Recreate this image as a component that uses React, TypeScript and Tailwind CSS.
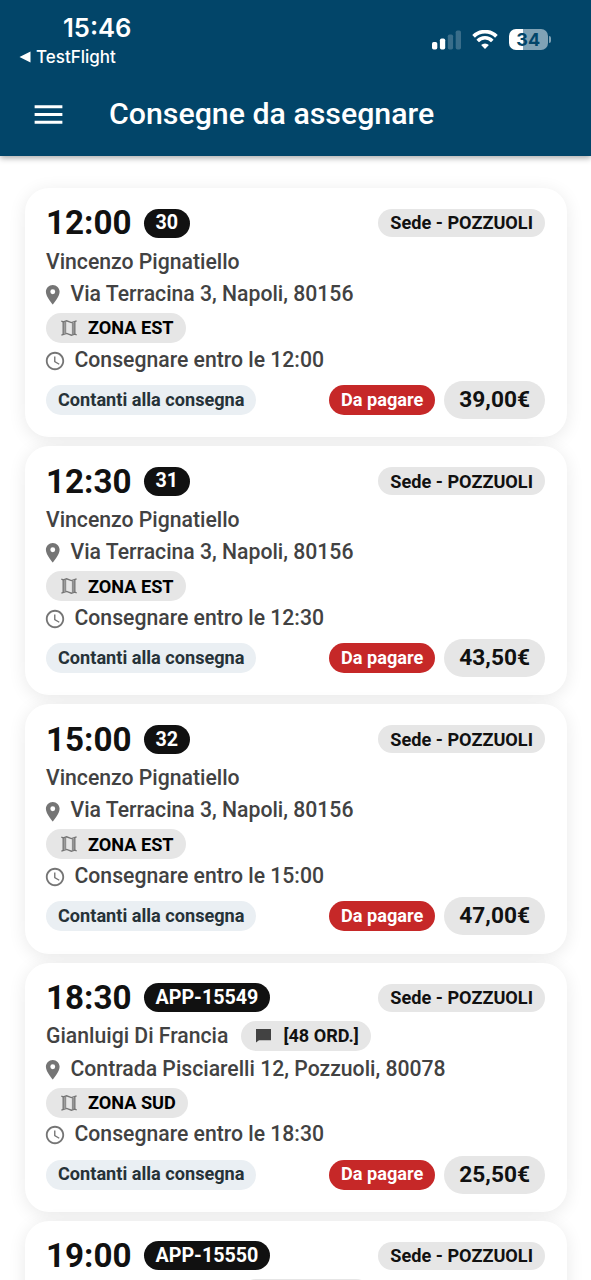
import { MdPlace, MdAccessTime, MdMenu } from 'react-icons/md'

type Delivery = {
  time: string
  code: string
  customer: string
  orders?: string
  address: string
  zone: string
  price: string
}

const deliveries: Delivery[] = [
  { time: '12:00', code: '30', customer: 'Vincenzo Pignatiello', address: 'Via Terracina 3, Napoli, 80156', zone: 'ZONA EST', price: '39,00€' },
  { time: '12:30', code: '31', customer: 'Vincenzo Pignatiello', address: 'Via Terracina 3, Napoli, 80156', zone: 'ZONA EST', price: '43,50€' },
  { time: '15:00', code: '32', customer: 'Vincenzo Pignatiello', address: 'Via Terracina 3, Napoli, 80156', zone: 'ZONA EST', price: '47,00€' },
  { time: '18:30', code: 'APP-15549', customer: 'Gianluigi Di Francia', orders: '[48 ORD.]', address: 'Contrada Pisciarelli 12, Pozzuoli, 80078', zone: 'ZONA SUD', price: '25,50€' },
  { time: '19:00', code: 'APP-15550', customer: 'Gianluigi Di Francia', orders: '[48 ORD.]', address: '', zone: '', price: '' },
]

function StatusBar() {
  return (
    <div className="flex h-[72px] justify-between pl-[19px] pr-[40px] font-['Inter',sans-serif] text-white">
      <div className="pt-[12px]">
        <div className="pl-[44px] text-[25.6px] font-semibold leading-8">15:46</div>
        <div className="flex items-center gap-[5px] pt-[1px] text-[17px] font-medium leading-6">
          <svg width="12" height="12" viewBox="0 0 12 12" fill="currentColor">
            <path d="M0.5 6 L11.5 0.4 V11.6 Z" />
          </svg>
          TestFlight
        </div>
      </div>
      <div className="flex h-10 items-center gap-[11px] self-start pt-[39px]">
        <svg width="30" height="20" viewBox="0 0 30 20" fill="currentColor">
          <rect x="1" y="12" width="5.3" height="7.5" rx="1.7" />
          <rect x="8.9" y="8.5" width="5.3" height="11" rx="1.7" />
          <rect x="16.8" y="4.5" width="5.3" height="15" rx="1.7" opacity="0.22" />
          <rect x="24.7" y="0.5" width="5.3" height="19" rx="1.7" opacity="0.22" />
        </svg>
        <svg width="26" height="19" viewBox="0 0 26 19" fill="none" stroke="currentColor">
          <path d="M1.6 6.3 A16.4 16.4 0 0 1 24.4 6.3" strokeWidth="3.8" />
          <path d="M5.7 10.9 A10.2 10.2 0 0 1 20.3 10.9" strokeWidth="3.6" />
          <path d="M13 18.9 L9.1 15 A5.7 5.7 0 0 1 16.9 15 Z" fill="currentColor" stroke="none" />
        </svg>
        <div className="flex items-center gap-[1px]">
          <div className="flex h-[21px] w-[38.5px] items-center justify-center rounded-[7px] bg-linear-to-r from-white from-36% to-[#80a2b5] to-36% text-[18px] font-bold leading-none text-[#024569]">
            34
          </div>
          <div className="h-[7px] w-[2.5px] rounded-r-full bg-[#80a2b5]" />
        </div>
      </div>
    </div>
  )
}

function MapIcon() {
  return (
    <svg className="ml-[3px] mr-[11px] shrink-0 text-[#757575]" width="16" height="16" viewBox="0 0 16 16" fill="none" stroke="currentColor">
      <path d="M0.3 1.1 L2.4 1.8 L5.6 0.8 L10.4 2.6 L15.6 0.8" strokeWidth="1.3" />
      <path d="M0.4 15.2 L5.6 13.5 L10.4 15.2 L13.6 14.2 L15.7 14.9" strokeWidth="1.3" />
      <path d="M2.2 1.6 V14.4 M13.8 1.4 V14.4" strokeWidth="1.4" />
      <path d="M3.2 2 H5.2 V13.4 H3.2 Z M10.9 3 H12.9 V14.2 H10.9 Z" fill="#8c8c8c" stroke="none" />
    </svg>
  )
}

function CommentIcon() {
  return (
    <svg className="ml-[3px] shrink-0 text-[#424242]" width="15" height="15" viewBox="0 0 15 15" fill="currentColor">
      <path d="M0 1 H15 V12.2 H3 L0 14.6 Z" />
    </svg>
  )
}

function DeliveryCard({ delivery: d }: { delivery: Delivery }) {
  return (
    <div className="h-[249.2px] shrink-0 rounded-[24px] bg-white px-[21.5px] pt-[20px] text-[#424242] shadow-[0_3px_18px_rgba(0,0,0,0.09)]">
      <div className="flex h-[30px] items-center">
        <span className="text-[33.2px] font-bold leading-none text-[#111]">{d.time}</span>
        <span className="ml-[12px] flex h-[29px] items-center rounded-full bg-[#111] px-3 text-[19.7px] font-bold text-white">{d.code}</span>
        <span className="ml-auto flex h-[28px] items-center rounded-full bg-[#e6e6e6] px-3 text-[18.15px] font-bold text-[#111]">
          Sede - POZZUOLI
        </span>
      </div>
      <div className="flex h-[46px] items-center text-[21.2px] font-medium">
        <span className="pt-px">{d.customer}</span>
        {d.orders && (
          <span className="ml-[13px] flex h-[30px] items-center gap-3 rounded-full bg-[#e6e6e6] px-3 text-[18.1px] font-bold text-[#111]">
            <CommentIcon />
            {d.orders}
          </span>
        )}
      </div>
      {d.address && (
        <>
          <div className="-mt-[4px] flex h-[28px] items-center text-[21.2px] font-medium">
            <MdPlace className="-ml-[5px] mr-[6px] mt-[2px] size-[23.5px] text-[#757575]" />
            {d.address}
          </div>
          <div className="mt-[5px] flex">
            <span className="flex h-[30px] items-center rounded-full bg-[#e6e6e6] px-3 text-[18.15px] font-bold text-black">
              <MapIcon />
              {d.zone}
            </span>
          </div>
          <div className="mt-[1.5px] flex h-[30px] items-center text-[21.2px] font-medium">
            <MdAccessTime className="-ml-[2px] mr-[8.5px] mt-[2px] size-[22px] text-[#757575]" />
            Consegnare entro le {d.time}
          </div>
          <div className="mt-[6.5px] flex h-[38px] items-center text-[18.15px] font-bold">
            <span className="flex h-[30px] items-center rounded-full bg-[#eaeff3] px-3 pb-px text-[#263238]">Contanti alla consegna</span>
            <span className="ml-auto flex h-[30px] items-center rounded-full bg-[#c62828] px-3 pb-px text-white">Da pagare</span>
            <span className="ml-[9px] flex h-[38px] items-center rounded-full bg-[#e6e6e6] px-[15px] text-[22.7px] text-[#111]">{d.price}</span>
          </div>
        </>
      )}
    </div>
  )
}

export default function App() {
  return (
    <div className="flex h-[1280px] w-[591px] flex-col overflow-hidden bg-white font-['Roboto',sans-serif]">
      <header className="relative h-[156px] shrink-0 bg-[#024569] shadow-[0_2px_6px_rgba(0,0,0,0.35)]">
        <StatusBar />
        <div className="flex h-[84px] items-center pl-[30px] text-white">
          <MdMenu className="size-[37px]" />
          <h1 className="ml-[42px] pb-px text-[30.3px] font-medium">Consegne da assegnare</h1>
        </div>
      </header>

      <main className="flex flex-col gap-[9px] px-[24.5px] pt-[32px]">
        {deliveries.map(d => (
          <DeliveryCard key={d.time} delivery={d} />
        ))}
      </main>
    </div>
  )
}
